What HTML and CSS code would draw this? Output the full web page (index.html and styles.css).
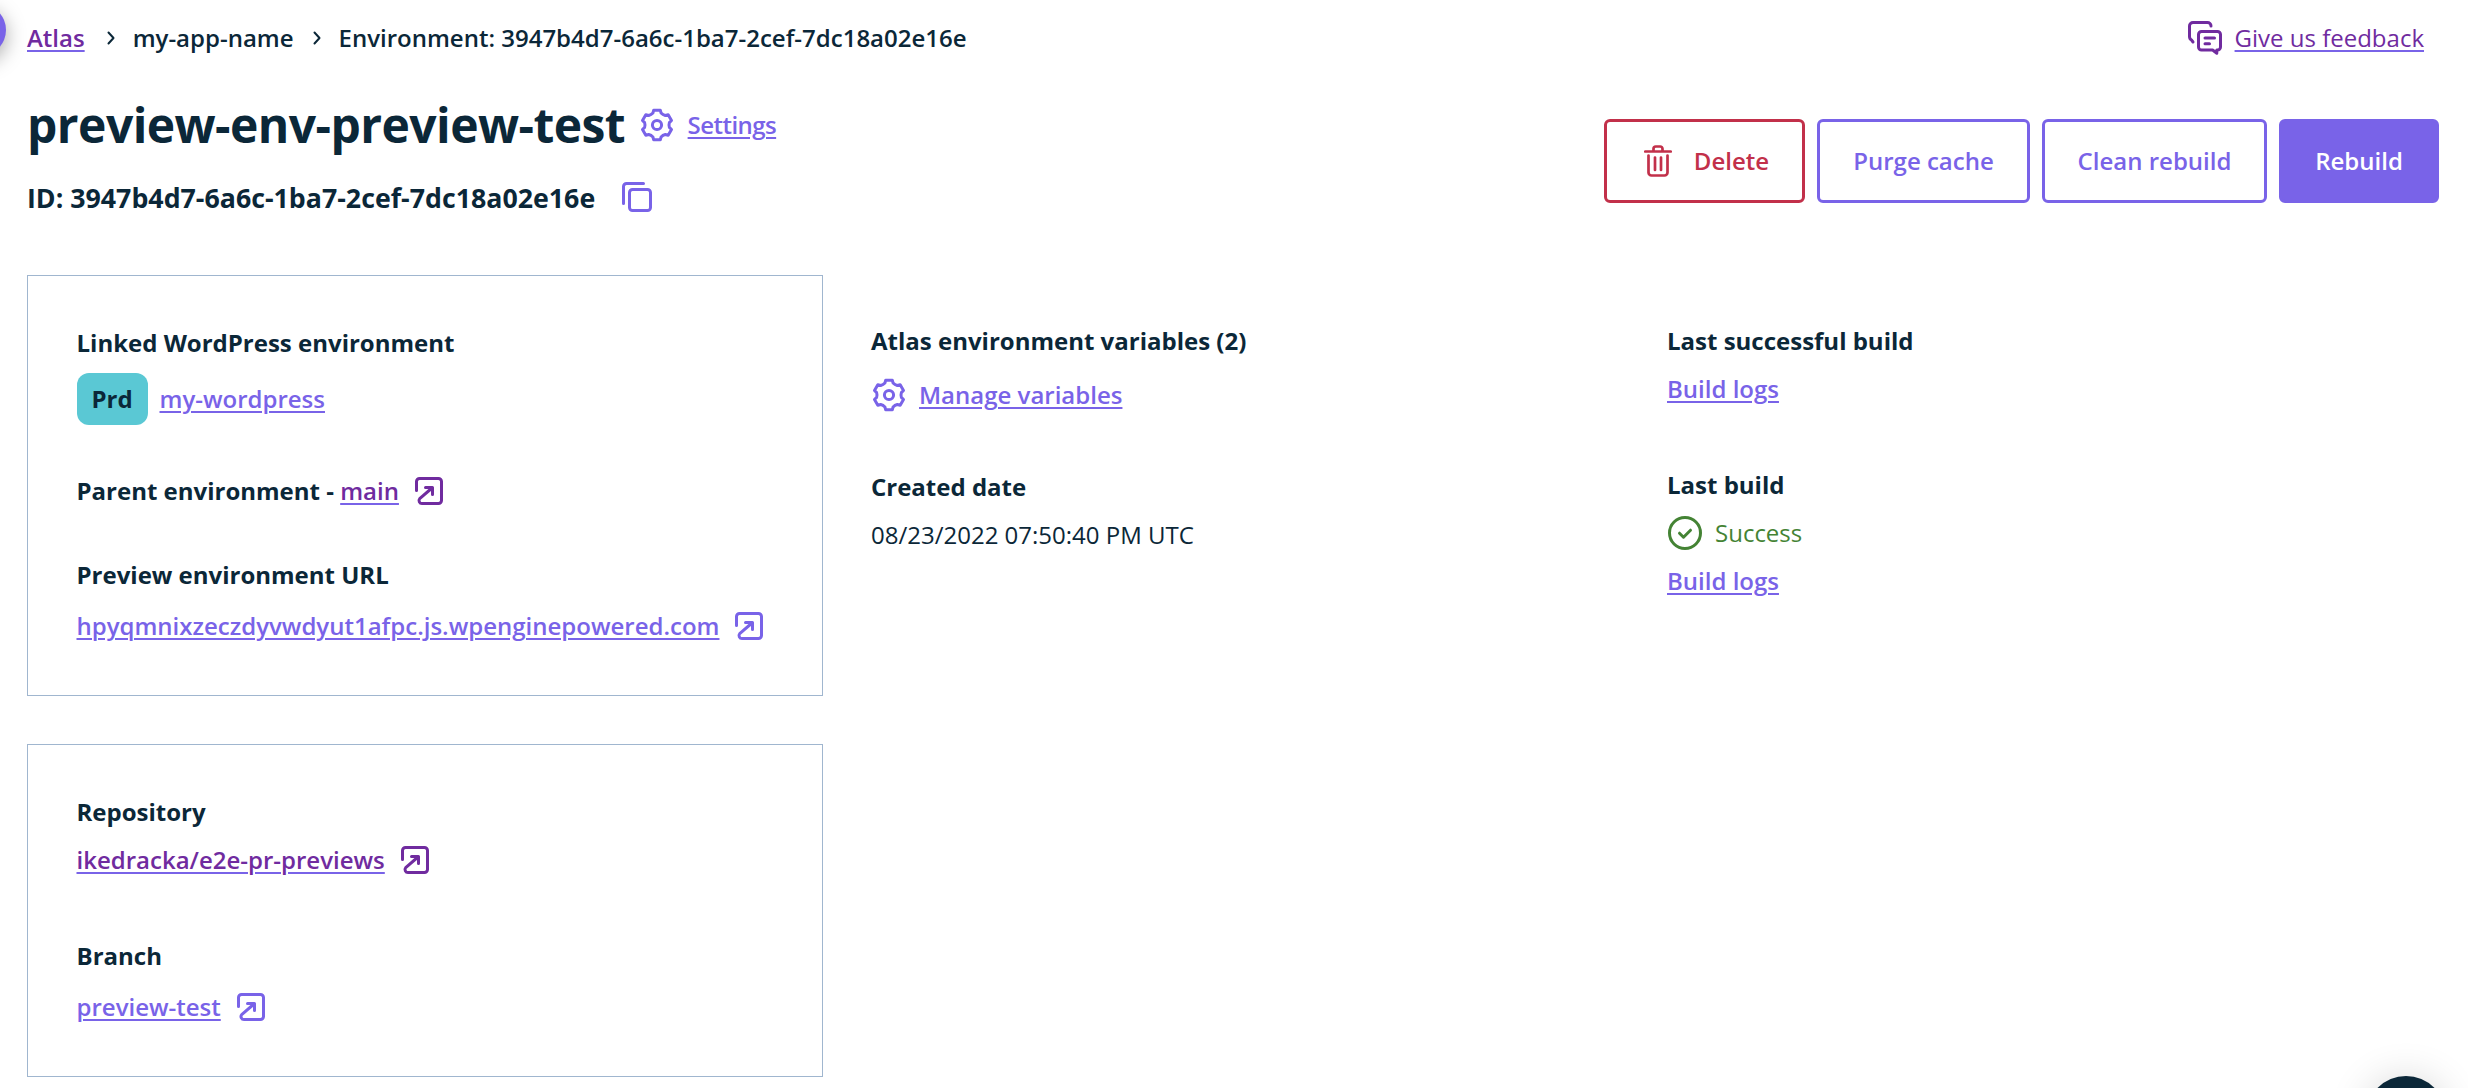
FILE: index.html
```html
<!DOCTYPE html>
<html lang="en">
<head>
<meta charset="utf-8">
<title>preview-env-preview-test</title>
<link rel="stylesheet" href="styles.css">
</head>
<body>
<svg class="sprite" aria-hidden="true">
  <symbol id="gear" viewBox="0 0 34 34">
    <path transform="translate(17 17)" d="M-3.3-14.85H3.3L4.1-11.9Q5.8-10.05 8.27-9.5L11.2-10.27L14.5-4.57L12.37-2.4Q11.6 0 12.37 2.4L14.5 4.57L11.2 10.27L8.27 9.5Q5.8 10.05 4.1 11.9L3.3 14.85H-3.3L-4.1 11.9Q-5.8 10.05-8.27 9.5L-11.2 10.27L-14.5 4.57L-12.37 2.4Q-11.6 0-12.37-2.4L-14.5-4.57L-11.2-10.27L-8.27-9.5Q-5.8-10.05-4.1-11.9Z"/>
    <circle cx="17" cy="17" r="4.6"/>
  </symbol>
  <symbol id="external" viewBox="0 0 28 28">
    <path d="M1.5 13.5V4.5a3 3 0 0 1 3-3h19a3 3 0 0 1 3 3v19a3 3 0 0 1-3 3h-16.500a3 3 0 0 1-2.300-4.900L17 11M10.500 10.500h7v7"/>
  </symbol>
  <symbol id="copy" viewBox="0 0 30 30">
    <rect x="7.500" y="7.500" width="21" height="21" rx="3"/>
    <path d="M1.500 21.500V4.500a3 3 0 0 1 3-3h17"/>
  </symbol>
  <symbol id="chat" viewBox="0 0 34 34">
    <path d="M5 21l-1.600-2.200Q1.500 18 1.500 15.500V5a3.500 3.500 0 0 1 3.500-3.500h14.500a3.500 3.500 0 0 1 3.500 3.500"/>
    <path d="M13.500 10.500h16a3 3 0 0 1 3 3v12.500a3 3 0 0 1-3 3h-.7v3.200l-4.200-3.200h-11.100a3 3 0 0 1-3-3v-12.500a3 3 0 0 1 3-3zM17 17h9.500M17 22.800h4.500"/>
  </symbol>
  <symbol id="trash" viewBox="0 0 28 32">
    <path d="M1.300 6.500h25.400M9.500 6V3.800a2.300 2.300 0 0 1 2.300-2.300h4.400a2.300 2.300 0 0 1 2.300 2.300V6M4.500 10.500v17a3 3 0 0 0 3 3h13a3 3 0 0 0 3-3v-17M11 12.500v12.500M17 12.500v12.500"/>
  </symbol>
  <symbol id="check" viewBox="0 0 34 34">
    <circle cx="17" cy="17" r="15.500"/>
    <path d="M11.500 17.200l4 4 7-7"/>
  </symbol>
  <symbol id="chevron" viewBox="0 0 8 14">
    <path d="M1.500 1.500L6.500 7l-5 5.500"/>
  </symbol>
</svg>

<span class="side-toggle"></span>
<div class="bubble-dock"><span class="chat-bubble"></span></div>

<div class="page">
  <div class="topbar">
    <nav class="crumbs">
      <a class="link visited" href="#">Atlas</a>
      <svg class="chevron first"><use href="#chevron"/></svg>
      <span>my-app-name</span>
      <svg class="chevron"><use href="#chevron"/></svg>
      <span>Environment: 3947b4d7-6a6c-1ba7-2cef-7dc18a02e16e</span>
    </nav>
    <div class="feedback">
      <svg class="icon-34"><use href="#chat"/></svg>
      <a class="link visited" href="#">Give us feedback</a>
    </div>
  </div>

  <header class="header">
    <div class="heading">
      <div class="title-row">
        <h1>preview-env-preview-test</h1>
        <svg class="icon-34 accent"><use href="#gear"/></svg>
        <a class="link" href="#">Settings</a>
      </div>
      <div class="id-row">
        <h2>ID: 3947b4d7-6a6c-1ba7-2cef-7dc18a02e16e</h2>
        <svg class="icon-30 accent"><use href="#copy"/></svg>
      </div>
    </div>
    <div class="actions">
      <button class="btn danger"><svg class="trash"><use href="#trash"/></svg>Delete</button>
      <button class="btn purge">Purge cache</button>
      <button class="btn clean">Clean rebuild</button>
      <button class="btn primary">Rebuild</button>
    </div>
  </header>

  <main class="columns">
    <div class="stack">
      <section class="card card-env">
        <h3>Linked WordPress environment</h3>
        <div class="wp-row"><span class="badge">Prd</span><a class="link" href="#">my-wordpress</a></div>
        <div class="parent-row"><h3>Parent environment - <a class="link visited" href="#">main</a></h3><svg class="icon-28 visited"><use href="#external"/></svg></div>
        <h3>Preview environment URL</h3>
        <div class="ext-row"><a class="link" href="#">hpyqmnixzeczdyvwdyut1afpc.js.wpenginepowered.com</a><svg class="icon-28 accent"><use href="#external"/></svg></div>
      </section>
      <section class="card card-repo">
        <h3>Repository</h3>
        <div class="repo-row"><a class="link visited" href="#">ikedracka/e2e-pr-previews</a><svg class="icon-28 visited"><use href="#external"/></svg></div>
        <h3>Branch</h3>
        <div class="ext-row"><a class="link" href="#">preview-test</a><svg class="icon-28 accent"><use href="#external"/></svg></div>
      </section>
    </div>

    <section class="column">
      <h3>Atlas environment variables (2)</h3>
      <div class="vars-row"><svg class="icon-34 accent"><use href="#gear"/></svg><a class="link" href="#">Manage variables</a></div>
      <h3>Created date</h3>
      <p>08/23/2022 07:50:40 PM UTC</p>
    </section>

    <section class="column">
      <h3>Last successful build</h3>
      <div class="log-row"><a class="link" href="#">Build logs</a></div>
      <h3>Last build</h3>
      <div class="status"><svg class="icon-34"><use href="#check"/></svg>Success</div>
      <div><a class="link" href="#">Build logs</a></div>
    </section>
  </main>
</div>
</body>
</html>
```
FILE: styles.css
```css
* { box-sizing: border-box; }

html, body { height: 100%; }

body {
  margin: 0;
  overflow: hidden;
  position: relative;
  background: #fff;
  color: #0b2738;
  font: 400 24px/48px "Open Sans", sans-serif;
}

h1, h2, h3, p { margin: 0; font-size: inherit; }

svg {
  flex: none;
  fill: none;
  stroke: currentColor;
  stroke-width: 3;
  stroke-linecap: round;
  stroke-linejoin: round;
}

.sprite { position: absolute; width: 0; height: 0; }
.icon-28 { width: 28px; height: 28px; }
.icon-30 { width: 30px; height: 30px; }
.icon-34 { width: 34px; height: 34px; }
.chevron { width: 8px; height: 14px; stroke-width: 2; }

.link {
  color: #7963e8;
  font-weight: 600;
  text-decoration: underline 2px #7963e8;
  text-underline-offset: 3px;
}
.accent { color: #7963e8; }
.visited, .link.visited { color: #702b9f; }

.side-toggle {
  position: absolute;
  left: -46px;
  top: 4px;
  width: 52px;
  height: 52px;
  border-radius: 50%;
  background: #7963e8;
  box-shadow: 0 6px 20px rgba(0, 0, 0, .35);
}

/* The chat bubble peeks out from below the viewport. */
.bubble-dock {
  position: absolute;
  right: 0;
  bottom: 0;
  width: 160px;
  height: 70px;
  overflow: clip;
  pointer-events: none;
}
.chat-bubble {
  position: absolute;
  left: 58px;
  top: 58px;
  width: 80px;
  height: 80px;
  border-radius: 50%;
  background: #0b2738;
  box-shadow: 0 2px 40px rgba(0, 0, 0, .16);
}

.page { padding: 14px 29px 0 27px; }

.topbar { display: flex; justify-content: space-between; height: 48px; }
.crumbs { display: flex; align-items: center; font-weight: 600; }
.crumbs .chevron { margin: 0 18px 0 19px; }
.crumbs .chevron.first { margin-left: 22px; }
.feedback {
  display: flex;
  align-items: center;
  gap: 13px;
  margin-right: 15px;
  color: #702b9f;
}
.feedback .link { font-weight: 400; }

.header { display: flex; justify-content: space-between; height: 213px; }
.title-row {
  display: flex;
  align-items: center;
  margin-top: 31px;
  height: 64px;
  letter-spacing: -.55px;
}
.title-row h1 { font-size: 48px; line-height: 64px; font-weight: 700; }
.title-row svg { margin: 0 14px 0 14.5px; }
.id-row { display: flex; align-items: center; gap: 27px; margin-top: 16px; height: 48px; }
.id-row h2 { padding-top: 1px; font-size: 26.75px; font-weight: 700; }

.actions { display: flex; gap: 12px; margin-top: 57px; height: 84px; }
.btn {
  display: flex;
  align-items: center;
  justify-content: center;
  border: 3px solid #7963e8;
  border-radius: 6px;
  padding: 0;
  background: #fff;
  color: #7963e8;
  font: 600 24px/48px "Open Sans", sans-serif;
}
.danger { width: 201px; padding-left: 4px; border-color: #c2304a; color: #c2304a; gap: 22px; }
.trash { width: 28px; height: 32px; stroke-width: 2.700; }
.purge { width: 213px; }
.clean { width: 225px; }
.primary { width: 160px; background: #7963e8; color: #fff; }

.columns { display: grid; grid-template-columns: 796px 748px 1fr; column-gap: 48px; }
.stack { display: flex; flex-direction: column; gap: 48px; }
.card { border: 1px solid #a0b6cf; padding: 43px 48.5px 0; }
.card-env { height: 421px; }
.card-repo { height: 333px; }
.column { padding-top: 42px; }

.wp-row { display: flex; align-items: center; gap: 12px; height: 52px; margin: 6px 0 42px; }
.badge {
  width: 71px;
  height: 52px;
  border-radius: 12px;
  background: #5ac8d4;
  font-weight: 700;
  line-height: 52px;
  text-align: center;
}
.parent-row { display: flex; align-items: center; gap: 16px; height: 48px; margin-bottom: 36px; }
.ext-row { display: flex; align-items: center; gap: 16px; height: 48px; margin-top: 3px; }
.repo-row { display: flex; align-items: center; gap: 16px; height: 48px; margin-bottom: 48px; }
.vars-row { display: flex; align-items: center; gap: 13px; height: 48px; margin: 6px 0 44px; padding-left: 1px; }
.log-row { margin-bottom: 48px; }
.status { display: flex; align-items: center; gap: 13px; padding-left: 1px; color: #448334; }
```
